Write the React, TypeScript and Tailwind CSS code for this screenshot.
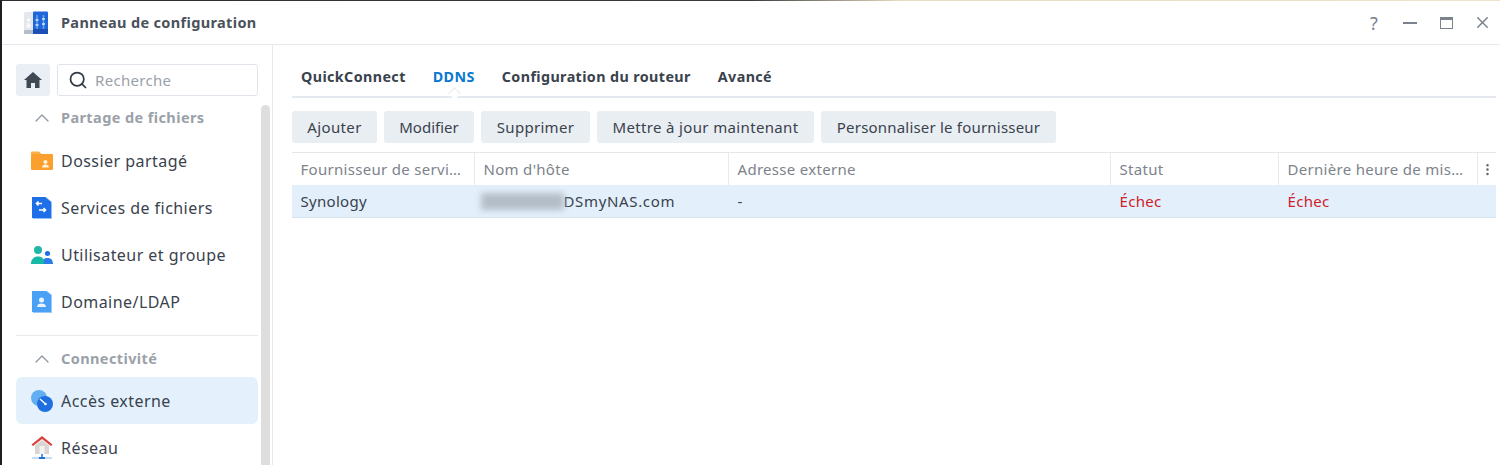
import React from "react";
import { ChevronUp, Search, X, EllipsisVertical } from "lucide-react";

const Folder = () => (
  <svg width="24" height="24" viewBox="0 0 24 24">
    <path d="M1 3.500a1 1 0 0 1 1-1h7l2.500 2.500H1z" fill="#f9b04a" />
    <rect x="1" y="5" width="22" height="16" rx="1" fill="#fb9f2e" />
    <circle cx="15.500" cy="13" r="2" fill="#fff3dc" />
    <path d="M12 18.500c0-2 1.500-3 3.500-3s3.500 1 3.500 3z" fill="#fff3dc" />
  </svg>
);
const FileSvc = () => (
  <svg width="24" height="24" viewBox="0 0 24 24">
    <path d="M3 1h13l6 5v17H3z" fill="#93c0f8" />
    <path d="M2 1h13l6 5v16H2z" fill="#1f6fe8" />
    <path d="M12 7.500H6.500m2-2-2 2 2 2M9 14h6.500m-2-2 2 2-2 2" stroke="#fff" strokeWidth="1.600" fill="none" />
  </svg>
);
const Users = () => (
  <svg width="24" height="24" viewBox="0 0 24 24">
    <circle cx="8" cy="7" r="4" fill="#1fb5a8" />
    <circle cx="17.500" cy="10.500" r="2.600" fill="#1f6fe8" />
    <path d="M1 21c0-5 3-7.500 7-7.500s7 2.500 7 7.500z" fill="#17b8a6" />
    <path d="M13.500 21h9.500c0-4-2-6-5.500-6-1.500 0-2.800.4-3.800 1.300 0 0 .8 2 -.2 4.700z" fill="#2a7de8" />
  </svg>
);
const Domain = () => (
  <svg width="24" height="24" viewBox="0 0 24 24">
    <path d="M3 1h14l5 4v18H3z" fill="#9cc9fa" />
    <path d="M2 1h14l5 4v17H2z" fill="#4aa0f5" />
    <circle cx="11.500" cy="10" r="2.500" fill="#e8f3ff" />
    <path d="M7 17c0-2.500 2-3.500 4.500-3.500s4.500 1 4.500 3.500z" fill="#e8f3ff" />
  </svg>
);
const Access = () => (
  <svg width="24" height="24" viewBox="0 0 24 24">
    <circle cx="9" cy="9" r="8" fill="#62aef0" />
    <circle cx="15" cy="15" r="8" fill="#1f6fe0" />
    <path d="M10 10l5.500 5" stroke="#fff" strokeWidth="1.400" />
    <circle cx="15.500" cy="15" r="1.300" fill="#fff" />
  </svg>
);
const Network = () => (
  <svg width="24" height="24" viewBox="0 0 24 24">
    <path d="M12 0L1.500 8.500 3 10l9-7 9 7 1.500-1.500z" fill="#d8413f" />
    <path d="M5 9.500L12 4l7 5.500V18H5z" fill="#d9d5d2" />
    <rect x="9.500" y="10" width="5" height="8" fill="#f4f2f0" />
    <path d="M12 18v3" stroke="#1f6fe0" strokeWidth="1.500" />
    <path d="M2 22h20" stroke="#8db8ec" strokeWidth="1" />
    <path d="M9 22h6" stroke="#1f6fe0" strokeWidth="2" />
  </svg>
);
const AppLogo = () => (
  <svg width="26" height="24" viewBox="0 0 26 24">
    <rect x="1" y="1" width="10" height="22" rx="1.500" fill="#e4e7ec" />
    <rect x="1" y="19" width="10" height="4" rx="1" fill="#b4bdcb" />
    <circle cx="5.500" cy="9" r="1.500" fill="#fff" />
    <rect x="3.500" y="12" width="4" height="5" rx="2" fill="#f8f9fb" />
    <rect x="10" y="0.500" width="15" height="22.500" rx="1" fill="#1f66d8" />
    <rect x="10" y="18" width="15" height="5" fill="#1a50b4" />
    <path d="M14 4v14M20.500 4v14" stroke="#6ba6f0" strokeWidth="1.500" />
    <path d="M12.500 9h3M19 13h3M12.500 14h3M19 8h3" stroke="#d6e8ff" strokeWidth="1.500" />
  </svg>
);

function Item({ icon, label, active }: { icon: React.ReactNode; label: string; active?: boolean }) {
  return (
    <div className={`flex h-[47px] items-center gap-[7px] rounded-md pl-[13px] text-[16px] tracking-[0.45px] text-[#39424d] ${active ? "bg-[#e4f1fc]" : ""}`}>
      <span className="flex w-[25px] shrink-0 justify-center">{icon}</span>
      <span>{label}</span>
    </div>
  );
}

function Section({ label }: { label: string }) {
  return (
    <div className="flex h-[28px] items-center text-[14.500px] font-bold tracking-[0.4px] text-[#9aa1a9]">
      <ChevronUp size={24} strokeWidth={1.300} className="ml-[14px] mr-[7px] text-[#8f969e]" />
      <span>{label}</span>
    </div>
  );
}

const cols = [
  { w: "w-[183px]", h: "Fournisseur de servi…", c: "Synology" },
  { w: "w-[254px]", h: "Nom d'hôte", c: "host" },
  { w: "w-[382px]", h: "Adresse externe", c: "-" },
  { w: "w-[168px]", h: "Statut", c: "Échec" },
  { w: "w-[199px]", h: "Dernière heure de mis…", c: "Échec" },
];

const buttons = [
  { t: "Ajouter", w: "w-[85px] tracking-[0.4px]" },
  { t: "Modifier", w: "w-[90px] tracking-[0px]" },
  { t: "Supprimer", w: "w-[109px] tracking-[0.3px]" },
  { t: "Mettre à jour maintenant", w: "w-[217px] tracking-[0.35px]" },
  { t: "Personnaliser le fournisseur", w: "w-[235px] tracking-[0.2px]" },
];

export default function App() {
  return (
    <div className="flex h-[465px] w-[1500px] flex-col overflow-hidden border-l-2 border-[#1d1f24] bg-white font-['Noto_Sans','Open_Sans',sans-serif]">
      <div className="h-px shrink-0 bg-[linear-gradient(90deg,#2b2d33_0%,#3a3a3a_50%,#e8dcc0_60%,#eee3cc_100%)]" />
      <header className="flex h-[44px] shrink-0 items-center border-b border-[#e6e8eb] pl-[21px]">
        <AppLogo />
        <h1 className="ml-[12px] text-[14.500px] font-bold tracking-[0.35px] text-[#4a525c]">Panneau de configuration</h1>
        <div className="ml-auto flex items-center text-[#7a828c]">
          <span className="flex w-[36px] justify-center text-[18px] leading-none">?</span>
          <span className="flex w-[36px] justify-center"><span className="h-[2px] w-[14px] bg-[#7a828c]" /></span>
          <span className="flex w-[36px] justify-center"><span className="h-[12px] w-[13px] border-[1.500px] border-t-[3px] border-[#7a828c]" /></span>
          <span className="flex w-[36px] justify-center"><X size={19} strokeWidth={1.800} /></span>
        </div>
      </header>
      <div className="flex min-h-0 flex-1">
        <aside className="flex w-[271px] shrink-0 flex-col border-r border-[#e6e8eb]">
          <div className="flex shrink-0 gap-[7px] pl-[14px] pr-[14px] pt-[19px] pb-[8px]">
            <div className="flex h-[32px] w-[34px] items-center justify-center rounded-[3px] bg-[#eaeff5]">
              <svg width="18" height="16" viewBox="0 0 18 16">
                <path d="M9 0L0 8h2.500v8h4.500v-5h4v5h4.500V8H18z" fill="#3f4853" />
              </svg>
            </div>
            <div className="flex h-[32px] flex-1 items-center rounded-[3px] border border-[#dfe4ea] pl-[10px]">
              <Search size={20} strokeWidth={2.100} className="text-[#333b45]" />
              <span className="ml-[7px] text-[15px] tracking-[0.3px] text-[#9aa1a9]">Recherche</span>
            </div>
          </div>
          <div className="flex min-h-0 flex-1 gap-[3px] pl-[14px] pr-[2px]">
            <div className="min-w-0 flex-1 overflow-hidden">
              <div className="mb-[5px]"><Section label="Partage de fichiers" /></div>
              <Item icon={<Folder />} label="Dossier partagé" />
              <Item icon={<FileSvc />} label="Services de fichiers" />
              <Item icon={<Users />} label="Utilisateur et groupe" />
              <Item icon={<Domain />} label="Domaine/LDAP" />
              <div className="mt-[10px] border-t border-[#e8eaed]" />
              <div className="mt-[9px] mb-[4px]"><Section label="Connectivité" /></div>
              <Item icon={<Access />} label="Accès externe" active />
              <Item icon={<Network />} label="Réseau" />
            </div>
            <div className="mt-[1px] w-[9px] shrink-0 rounded-t-md bg-[#dedede]" />
          </div>
        </aside>
        <main className="min-w-0 flex-1 pl-[19px] pr-[4px]">
          <nav className="flex h-[53px] items-center gap-[27px] border-b-2 border-[#e4e9ef] pl-[9px] pt-[12px] text-[14.300px] font-bold tracking-[0.4px] text-[#39424d]">
            <span>QuickConnect</span>
            <span className="relative text-[#0b78d0]">
              DDNS
              <span className="absolute left-[17px] top-[23px] h-[9px] w-[9px] rotate-45 border-l border-t border-[#e4e9ef] bg-white" />
            </span>
            <span>Configuration du routeur</span>
            <span>Avancé</span>
          </nav>
          <div className="mt-[13px] flex gap-[7px]">
            {buttons.map((b) => (
              <button key={b.t} className={`h-[32px] rounded-[3px] bg-[#e9eef3] text-[15px] text-[#39424d] ${b.w}`}>{b.t}</button>
            ))}
          </div>
          <div className="mt-[9px] border-t border-[#e4e7ea]">
            <div className="flex h-[32px] items-center text-[15px] tracking-[0.3px] text-[#7c838b]">
              {cols.map((c) => (
                <div key={c.h} className={`${c.w} flex h-full items-center truncate border-r border-[#e8eaed] pl-[8.500px]`}>{c.h}</div>
              ))}
              <div className="flex flex-1 justify-center"><EllipsisVertical size={15} className="text-[#5e666f]" /></div>
            </div>
            <div className="flex h-[33px] items-center border-b border-[#d5e3f0] bg-[#e3f0fb] text-[15px] tracking-[0.3px] text-[#39424d]">
              {cols.map((c) => (
                <div key={c.h} className={`${c.w} relative flex items-center pl-[8.500px] ${c.c === "Échec" ? "text-[#d0202a]" : ""}`}>
                  {c.c === "host" ? (
                    <>
                      <span className="ml-[-3px] h-[17px] w-[83px] bg-[#b4bec8] blur-[3px]" />
                      <span className="tracking-[0.65px]">DSmyNAS.com</span>
                    </>
                  ) : c.c}
                </div>
              ))}
            </div>
          </div>
        </main>
      </div>
    </div>
  );
}
